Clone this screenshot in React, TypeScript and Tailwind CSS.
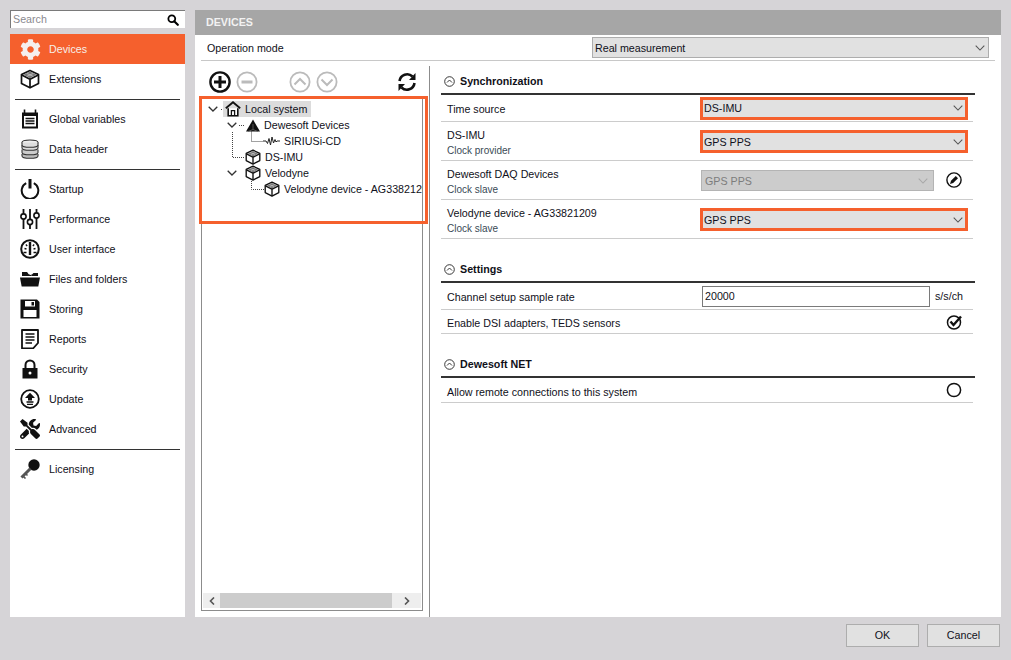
import React from "react";
import { FaCog, FaTools } from "react-icons/fa";

const S = ({ children, className = "w-5 h-5", vb = "0 0 20 20" }: { children: React.ReactNode; className?: string; vb?: string }) => (
  <svg viewBox={vb} className={className + " shrink-0"}>{children}</svg>
);

const Cube = ({ className = "w-5 h-5" }: { className?: string }) => (
  <S className={className}>
    <path d="M10 1.5 18.5 5.5V14.5L10 18.8 1.5 14.5V5.5Z" fill="#fff" stroke="#111" strokeWidth="1.7" strokeLinejoin="round" />
    <path d="M1.8 6 10 10.2 18.2 6M10 10.2V18.5" fill="none" stroke="#111" strokeWidth="1.7" />
    <path d="M10 2.5 16.5 5.8 10 9.2 3.5 5.8Z" fill="#777" />
    <path d="M7 4.5 13 7.3M13 4.5 7 7.3" stroke="#ddd" strokeWidth=".6" />
  </S>
);

const Search = () => (
  <S className="w-3 h-3">
    <circle cx="8" cy="8" r="5.7" fill="none" stroke="#000" strokeWidth="3" />
    <path d="M12 12 18 18" stroke="#000" strokeWidth="3.6" strokeLinecap="round" />
  </S>
);

const icons: Record<string, React.ReactNode> = {
  Devices: <FaCog className="w-[21px] h-[21px] text-[#f5f0ee]" />,
  Extensions: <Cube />,
  "Global variables": (
    <S>
      <path d="M2 3.5H18V19.5H2Z" fill="#111" />
      <path d="M4 7H16V17.5H4Z" fill="#fff" />
      <path d="M4.5 .5V4.5M15.5 .5V4.5" stroke="#111" strokeWidth="1.6" />
      <path d="M5.5 9.5H14.5M5.5 12H14.5M5.5 14.5H14.5" stroke="#111" strokeWidth="1.3" />
    </S>
  ),
  "Data header": (
    <S>
      <g fill="#fff" stroke="#333" strokeWidth="1.1">
        <path d="M2 15v2c0 1.5 3.6 2.3 8 2.3s8-.8 8-2.3v-2" fill="#bbb" />
        <path d="M2 10.5v3c0 1.5 3.6 2.3 8 2.3s8-.8 8-2.3v-3" fill="#ccc" />
        <path d="M2 6v3c0 1.5 3.6 2.3 8 2.3s8-.8 8-2.3V6" fill="#ddd" />
        <ellipse cx="10" cy="3.5" rx="8" ry="2.5" fill="#eee" />
        <path d="M2 3.5V6c0 1.5 3.6 2.3 8 2.3s8-.8 8-2.3V3.5" fill="#ddd" />
      </g>
    </S>
  ),
  Startup: (
    <S>
      <path d="M6.2 4.2A8.3 8.3 0 1 0 13.8 4.2" fill="none" stroke="#111" strokeWidth="2" />
      <path d="M10 0V9.5" stroke="#111" strokeWidth="3" />
    </S>
  ),
  Performance: (
    <S>
      <path d="M3.5 0V20M10 0V20M16.5 0V20" stroke="#111" strokeWidth="1.8" />
      <circle cx="3.5" cy="7.5" r="2.6" fill="#fff" stroke="#111" strokeWidth="1.6" />
      <circle cx="10" cy="13" r="2.6" fill="#fff" stroke="#111" strokeWidth="1.6" />
      <circle cx="16.5" cy="6.5" r="2.6" fill="#fff" stroke="#111" strokeWidth="1.6" />
    </S>
  ),
  "User interface": (
    <S>
      <circle cx="10" cy="10" r="8.8" fill="#fff" stroke="#111" strokeWidth="2" />
      <path d="M10 3V16" stroke="#111" strokeWidth="2.4" />
      <path d="M4.5 9.5 6.5 10M15.5 9.5 13.5 10M5.8 5.5 7.2 7M14.2 5.5 12.8 7M3.5 13.5H6.5M13.5 13.5H16.5" stroke="#111" strokeWidth="1.3" />
    </S>
  ),
  "Files and folders": (
    <S>
      <path d="M2 3H7L9 5.5H12L13.5 4H18V7H2Z" fill="#111" />
      <path d="M8 3.5 11.5 6" stroke="#fff" strokeWidth="1" />
      <path d="M0 8.5H20L18.3 17.5H1.7Z" fill="#111" />
    </S>
  ),
  Storing: (
    <S>
      <path d="M.5 .5H17L19.5 3V19.5H.5Z" fill="#111" />
      <path d="M5 2H15V7.5H5Z" fill="#fff" />
      <path d="M11.5 3H14V6.5H11.5Z" fill="#111" />
      <path d="M3.5 11H16.5V18H3.5Z" fill="#fff" />
    </S>
  ),
  Reports: (
    <S>
      <path d="M2 1H18V14L13 19.5H2Z" fill="#fff" stroke="#111" strokeWidth="1.8" strokeLinejoin="round" />
      <path d="M5.5 5H14.5M5.5 8H14.5M5.5 11H14.5M5.5 14H12" stroke="#111" strokeWidth="1.3" />
    </S>
  ),
  Security: (
    <S>
      <path d="M5.5 9V6a4.5 4.5 0 0 1 9 0v3" fill="none" stroke="#111" strokeWidth="2" />
      <path d="M2.5 9H17.5V19.5H2.5Z" fill="#111" />
      <circle cx="10" cy="14" r="1.5" fill="#fff" />
    </S>
  ),
  Update: (
    <S>
      <circle cx="10" cy="10" r="8.8" fill="#fff" stroke="#111" strokeWidth="1.8" />
      <path d="M10 3.8 15 9H12V11.5H8V9H5Z" fill="#111" />
      <path d="M6.5 13H13.5M7 15.3H13" stroke="#111" strokeWidth="1.3" />
    </S>
  ),
  Advanced: <FaTools className="w-5 h-5 text-[#111]" />,
  Licensing: (
    <S>
      <circle cx="14" cy="6" r="5.7" fill="#111" />
      <path d="M10.5 9.5 1.5 18.5" stroke="#555" strokeWidth="3" />
      <path d="M3 17 5.5 19.5M5.5 14.5 7.5 16.5" stroke="#555" strokeWidth="1.6" />
    </S>
  ),
};

const groups = [
  ["Devices", "Extensions"],
  ["Global variables", "Data header"],
  ["Startup", "Performance", "User interface", "Files and folders", "Storing", "Reports", "Security", "Update", "Advanced"],
  ["Licensing"],
];

const Chevron = ({ color = "#555", w = 1.05 }: { color?: string; w?: number }) => (
  <svg viewBox="0 0 10 6" className="w-[10px] h-[6px] shrink-0">
    <path d="M.7 .7 5 5 9.3 .7" fill="none" stroke={color} strokeWidth={w} />
  </svg>
);

const Select = ({ value, className = "" }: { value: string; className?: string }) => (
  <div className={"flex items-center justify-between bg-[#e1e1e1] pl-[1px] text-[#101020] " + className}>
    <span className="pt-[1px]">{value}</span>
    <Chevron />
  </div>
);

const OrangeSelect = ({ value, tall }: { value: string; tall?: boolean }) => (
  <Select value={value} className={"w-[268px] h-[23px] border-[3px] border-[#f5602d] pr-[2px] " + (tall ? "mt-[1px]" : "")} />
);

const CircleBtn = ({ dir, color, w = 1.8 }: { dir: "up" | "down" | "plus" | "minus"; color: string; w?: number }) => (
  <svg viewBox="0 0 22 22" className="w-[22px] h-[22px] shrink-0">
    <circle cx="11" cy="11" r="9.6" fill="none" stroke={color} strokeWidth={w} />
    {dir === "plus" && <path d="M11 5V17M5 11H17" stroke={color} strokeWidth="3" />}
    {dir === "minus" && <path d="M5.5 11H16.5" stroke={color} strokeWidth="3" />}
    {dir === "up" && <path d="M5.5 13.5 11 8 16.5 13.5" fill="none" stroke={color} strokeWidth="2" />}
    {dir === "down" && <path d="M5.5 8.5 11 14 16.5 8.5" fill="none" stroke={color} strokeWidth="2" />}
  </svg>
);

const Refresh = () => (
  <svg viewBox="0 0 20 20" className="w-5 h-5 shrink-0">
    <path d="M2.5 9A7.7 7.7 0 0 1 15.5 4.5" fill="none" stroke="#111" strokeWidth="2.6" />
    <path d="M17.5 11A7.7 7.7 0 0 1 4.5 15.5" fill="none" stroke="#111" strokeWidth="2.6" />
    <path d="M18.5 1V8H12Z" fill="#111" />
    <path d="M1.5 19V12H8Z" fill="#111" />
  </svg>
);

const SectionTitle = ({ title, first }: { title: string; first?: boolean }) => (
  <div className={"flex items-center gap-[5px] h-[27px] pt-[3px] pl-[3px] w-[534px] " + (first ? "" : "mt-[15px]")}>
    <svg viewBox="0 0 11 11" className="w-[11px] h-[11px] shrink-0">
      <circle cx="5.5" cy="5.5" r="4.8" fill="none" stroke="#222" strokeWidth=".9" />
      <path d="M3 6.5 5.5 4 8 6.5" fill="none" stroke="#222" strokeWidth=".9" />
    </svg>
    <span className="font-bold text-[#101018]">{title}</span>
  </div>
);

const Thick = () => <div className="w-[534px] h-[2px] bg-[#333]" />;

const Row = ({ label, sub, tall, h, low, children }: { label: string; sub?: string; tall?: boolean; h?: string; low?: boolean; children?: React.ReactNode }) => (
  <div className={"w-[532px] flex items-center border-b border-[#cccccc] " + (h ?? (tall ? "h-[39px]" : "h-[27px]"))}>
    <div className={"w-[259px] pl-[6px] shrink-0 " + (sub ? "pt-[3px]" : low ? "pt-[4px]" : "pt-[2px]")}>
      <div className="leading-[15px] text-[#101020]">{label}</div>
      {sub && <div className="leading-[15px] text-[#3a4a55] text-[10px]">{sub}</div>}
    </div>
    {children}
  </div>
);

const TreeRow = ({ pl, chev, icon, label, hl, chevAt }: { pl: string; chev?: boolean; chevAt?: string; icon: React.ReactNode; label: string; hl?: boolean }) => (
  <div className={"h-[16px] flex items-center relative whitespace-nowrap " + pl}>
    {chev && <span className={"absolute top-[5px] " + chevAt}><Chevron color="#333" w={1.3} /></span>}
    <div className={"flex items-center h-[16px] gap-[4px] pl-[2px] pr-[4px] " + (hl ? "bg-[#dcdcdc]" : "")}>
      {icon}
      <span className="text-[#101020]">{label}</span>
    </div>
  </div>
);

const Home = () => (
  <S className="w-4 h-4">
    <path d="M1 9 10 1.5 19 9" fill="none" stroke="#111" strokeWidth="2.2" />
    <path d="M4 9V18.5H16V9" fill="#fff" stroke="#111" strokeWidth="2" />
    <path d="M8 18.5V12H12V18.5" fill="none" stroke="#111" strokeWidth="1.6" />
  </S>
);

const Wave = () => (
  <svg viewBox="0 0 17 10" className="w-[17px] h-[10px] shrink-0">
    <path d="M0 5H3L4.5 7.5 6 2.5 7.5 9 9 1 10.5 7 12 3.5 13 6 14 5H17" fill="none" stroke="#222" strokeWidth="1" />
  </svg>
);

const Tri = () => (
  <svg viewBox="0 0 14 13" className="w-[14px] h-[13px] shrink-0">
    <path d="M7 .5 14 12.5H0Z" fill="#111" />
    <path d="M7 5V10.5L2 12.5M7 10.5 12 12.5" fill="none" stroke="#666" strokeWidth=".8" />
  </svg>
);

export default function App() {
  return (
    <div
      className="w-[1011px] h-[660px] bg-[#d6d4d7] flex flex-col text-[10.7px] overflow-hidden"
      style={{ fontFamily: '"Liberation Sans", "Noto Sans", sans-serif' }}
    >
      <div className="flex gap-[10px] pt-[10px] pl-[10px] pr-[10px] h-[617px]">
        <aside className="w-[175px] flex flex-col shrink-0">
          <div className="h-[18px] bg-white border-l-[1px] border-t-[1px] border-[#7a7a7a] flex items-center justify-between pl-[2px] pr-[6px] shrink-0">
            <span className="text-[#8a8a90]">Search</span>
            <Search />
          </div>
          <nav className="mt-[6px] flex-1 bg-white flex flex-col">
            {groups.map((g, i) => (
              <div key={i} className={i ? "mt-[4px] " : ""}>
                {i > 0 && <div className="h-[1px] bg-[#333] mx-[5px] mb-[4px] mt-[1px]" />}
                {g.map((n) => (
                  <div key={n} className={"h-[30px] flex items-center " + (n === "Devices" ? "bg-[#f5602d] text-[#f6efe9]" : "text-[#101020]")}>
                    <span className="w-[39px] flex justify-center pl-[1px]">{icons[n]}</span>
                    <span>{n}</span>
                  </div>
                ))}
              </div>
            ))}
          </nav>
        </aside>

        <main className="w-[806px] bg-white flex flex-col">
          <div className="h-[25px] bg-[#a6a6a6] text-[#f2f2f2] font-bold flex items-center pl-[11px] shrink-0">DEVICES</div>
          <div className="h-[26px] mx-[6px] flex items-center justify-between border-b border-[#c8c8c8] shrink-0 pl-[6px]">
            <span className="text-[#101020] pt-[2px]">Operation mode</span>
            <Select value="Real measurement" className="w-[397px] h-[21px] border border-[#adadad] pl-[2px] mr-[6px] pr-[3px]" />
          </div>
          <div className="flex flex-1 mt-[5px] min-h-0">
            <div className="w-[235px] shrink-0 border-r border-[#8c8c8c] pl-[6px] flex flex-col relative">
              <div className="h-[32px] flex items-center pl-[8px] shrink-0 w-[222px]">
                <CircleBtn dir="plus" color="#111" w={2.4} />
                <span className="ml-[5px]"><CircleBtn dir="minus" color="#bbb" /></span>
                <span className="ml-[31px]"><CircleBtn dir="up" color="#bbb" /></span>
                <span className="ml-[5px]"><CircleBtn dir="down" color="#bbb" /></span>
                <span className="ml-auto mr-[6px]"><Refresh /></span>
              </div>
              <div className="w-[222px] flex-1 mb-[6px] border border-[#8c8c8c] flex flex-col relative overflow-hidden pt-[2px] pl-[21px]">
                <svg className="absolute left-0 top-0 w-[222px] h-[110px] pointer-events-none" viewBox="0 0 222 110">
                  <g stroke="#444" strokeWidth="1" strokeDasharray="1 1" fill="none">
                    <path d="M19 10.5H23M37 26.5H43M30.5 33V58.5H43M49.5 26.5V42.5H61M49.5 80V90.5H62" />
                  </g>
                </svg>
                <TreeRow pl="pl-[0px]" chev chevAt="left-[-15px]" hl icon={<Home />} label="Local system" />
                <TreeRow pl="pl-[21px]" chev chevAt="left-[4px]" icon={<Tri />} label="Dewesoft Devices" />
                <TreeRow pl="pl-[38px]" icon={<Wave />} label="SIRIUSi-CD" />
                <TreeRow pl="pl-[20px]" icon={<Cube className="w-4 h-4" />} label="DS-IMU" />
                <TreeRow pl="pl-[20px]" chev chevAt="left-[4px]" icon={<Cube className="w-4 h-4" />} label="Velodyne" />
                <TreeRow pl="pl-[39px]" icon={<Cube className="w-4 h-4" />} label="Velodyne device - AG33821209" />
                <div className="absolute left-[1px] right-[1px] bottom-[2px] h-[15px] bg-[#eeeeee] flex items-center">
                  <div className="w-[17px] flex justify-center">
                    <svg viewBox="0 0 6 8" className="w-[6px] h-[8px]"><path d="M5 .5 1.5 4 5 7.5" fill="none" stroke="#555" strokeWidth="1.6" /></svg>
                  </div>
                  <div className="w-[172px] h-[15px] bg-[#cccccc]" />
                  <div className="flex-1 flex justify-center">
                    <svg viewBox="0 0 6 8" className="w-[6px] h-[8px]"><path d="M1 .5 4.5 4 1 7.5" fill="none" stroke="#555" strokeWidth="1.6" /></svg>
                  </div>
                </div>
              </div>
              <div className="absolute left-[4px] top-[30px] w-[229px] h-[128px] border-[3px] border-[#f5602d] pointer-events-none" />
            </div>

            <div className="pl-[11px] flex flex-col">
              <SectionTitle title="Synchronization" first />
              <Thick />
              <Row label="Time source"><OrangeSelect value="DS-IMU" /></Row>
              <Row label="DS-IMU" sub="Clock provider" tall><OrangeSelect value="GPS PPS" tall /></Row>
              <Row label="Dewesoft DAQ Devices" sub="Clock slave" tall>
                <div className="ml-[1px] mt-[1px] w-[233px] h-[21px] bg-[#cccccc] border border-[#b4b4b4] flex items-center justify-between pl-[3px] pr-[5px] text-[#7d7d7d]">
                  <span className="pt-[1px]">GPS PPS</span>
                  <Chevron color="#a8a8a8" />
                </div>
                <svg viewBox="0 0 16 16" className="w-4 h-4 ml-[12px] shrink-0">
                  <circle cx="8" cy="8" r="7.1" fill="#fff" stroke="#111" strokeWidth="1.4" />
                  <path d="M4 12 5 8.8 9.8 4 12 6.2 7.2 11Z" fill="#111" />
                </svg>
              </Row>
              <Row label="Velodyne device - AG33821209" sub="Clock slave" tall><OrangeSelect value="GPS PPS" tall /></Row>

              <SectionTitle title="Settings" />
              <Thick />
              <Row label="Channel setup sample rate">
                <div className="ml-[2px] w-[228px] h-[21px] border border-[#7a7a7a] bg-white flex items-center pl-[2px] pt-[1px] text-[#101020]">20000</div>
                <span className="ml-[5px] pt-[1px] text-[#101020]">s/s/ch</span>
              </Row>
              <Row label="Enable DSI adapters, TEDS sensors" h="h-[24px]" low>
                <svg viewBox="0 0 16 16" className="w-4 h-4 ml-auto mr-[11px] shrink-0">
                  <circle cx="8" cy="8.5" r="6.5" fill="#fff" stroke="#111" strokeWidth="1.5" />
                  <path d="M4.5 7.5 7.5 11 15 2.5" fill="none" stroke="#111" strokeWidth="2.4" />
                </svg>
              </Row>

              <SectionTitle title="Dewesoft NET" />
              <Thick />
              <Row label="Allow remote connections to this system" h="h-[25px]" low>
                <svg viewBox="0 0 16 16" className="w-4 h-4 ml-auto mr-[11px] shrink-0">
                  <circle cx="8" cy="8" r="6.6" fill="#fff" stroke="#111" strokeWidth="1.5" />
                </svg>
              </Row>
            </div>
          </div>
        </main>
      </div>
      <div className="flex justify-end gap-[8px] pt-[7px] pr-[11px]">
        {["OK", "Cancel"].map((b) => (
          <div key={b} className="w-[73px] h-[23px] bg-[#e1e1e1] border border-[#adadad] flex items-center justify-center text-[#101020]">{b}</div>
        ))}
      </div>
    </div>
  );
}
